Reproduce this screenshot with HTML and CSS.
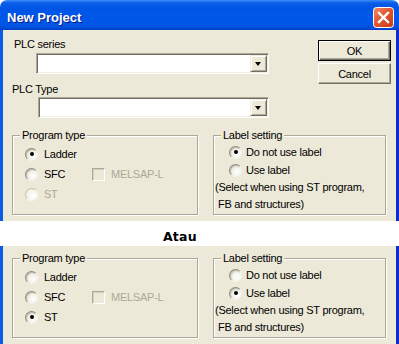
FILE: index.html
```html
<!DOCTYPE html>
<html lang="en">
<head>
    <meta charset="UTF-8">
    <meta name="viewport" content="width=device-width, initial-scale=1.0">
    <title>New Project</title>
    <link rel="stylesheet" href="styles.css">
</head>
<body>
    <div class="window">
        <div class="titlebar">
            <span class="title">New Project</span>
            <button class="close-btn" aria-label="Close">
                <svg width="21" height="21" viewBox="0 0 21 21">
                    <defs>
                        <linearGradient id="closeFill" x1="0" y1="0" x2="1" y2="1">
                            <stop offset="0" stop-color="#f08a68"/>
                            <stop offset="0.5" stop-color="#e0532c"/>
                            <stop offset="1" stop-color="#c43a16"/>
                        </linearGradient>
                    </defs>
                    <rect x="0.5" y="0.5" width="20" height="20" rx="3" fill="url(#closeFill)" stroke="#ffffff"/>
                    <path d="M6 6 L15 15 M15 6 L6 15" stroke="#ffffff" stroke-width="2.4" stroke-linecap="square"/>
                </svg>
            </button>
        </div>

        <div class="dialog-body">
            <div class="top-row">
                <div class="plc-fields">
                    <div class="field-label label-series">PLC series</div>
                    <div class="combo combo-series"><span class="combo-arrow"></span></div>
                    <div class="field-label label-type">PLC Type</div>
                    <div class="combo combo-type"><span class="combo-arrow"></span></div>
                </div>
                <div class="dialog-buttons">
                    <button class="btn btn-default">OK</button>
                    <button class="btn">Cancel</button>
                </div>
            </div>

            <div class="group-row">
                <div class="group group-program">
                    <span class="group-title">Program type</span>
                    <div class="option-row">
                        <span class="radio checked"></span><span>Ladder</span>
                    </div>
                    <div class="option-row">
                        <span class="option-pair"><span class="radio"></span><span>SFC</span></span>
                        <span class="checkbox disabled"></span><span class="muted">MELSAP-L</span>
                    </div>
                    <div class="option-row">
                        <span class="radio disabled"></span><span class="muted">ST</span>
                    </div>
                </div>
                <div class="group group-label">
                    <span class="group-title">Label setting</span>
                    <div class="label-row">
                        <span class="radio checked"></span><span>Do not use label</span>
                    </div>
                    <div class="label-row">
                        <span class="radio"></span><span>Use label</span>
                    </div>
                    <div class="note-line">(Select when using ST program,</div>
                    <div class="note-line note-indent">FB and structures)</div>
                </div>
            </div>
        </div>

        <div class="divider">Atau</div>

        <div class="dialog-body dialog-crop">
            <div class="group-row">
                <div class="group group-program">
                    <span class="group-title">Program type</span>
                    <div class="option-row">
                        <span class="radio"></span><span>Ladder</span>
                    </div>
                    <div class="option-row">
                        <span class="option-pair"><span class="radio"></span><span>SFC</span></span>
                        <span class="checkbox disabled"></span><span class="muted">MELSAP-L</span>
                    </div>
                    <div class="option-row">
                        <span class="radio checked"></span><span>ST</span>
                    </div>
                </div>
                <div class="group group-label">
                    <span class="group-title">Label setting</span>
                    <div class="label-row">
                        <span class="radio"></span><span>Do not use label</span>
                    </div>
                    <div class="label-row">
                        <span class="radio checked"></span><span>Use label</span>
                    </div>
                    <div class="note-line">(Select when using ST program,</div>
                    <div class="note-line note-indent">FB and structures)</div>
                </div>
            </div>
        </div>
    </div>
</body>
</html>
```

FILE: styles.css
```css
body {
    margin: 0;
    background-color: #ffffff;
    font-family: "Liberation Sans", Arial, sans-serif;
    font-size: 11px;
    letter-spacing: -0.25px;
    color: #000000;
}

.window {
    width: 399px;
}

/* Title bar */
.titlebar {
    height: 30px;
    display: flex;
    justify-content: space-between;
    align-items: flex-start;
    padding: 0 5px 0 7px;
    box-sizing: border-box;
    border-radius: 7px 7px 0 0;
    background: linear-gradient(to bottom, #3d8cf5 0px, #0a5ee8 3px, #0055e5 8px, #0058eb 20px, #0053e0 27px, #003dc8 30px);
}

.title {
    margin-top: 10px;
    font-size: 13px;
    line-height: 15px;
    font-weight: bold;
    letter-spacing: 0;
    color: #ffffff;
    text-shadow: 1px 1px 0 #0a1883;
}

.close-btn {
    margin-top: 7px;
    padding: 0;
    border: none;
    background: none;
    width: 21px;
    height: 21px;
}

.close-btn svg {
    display: block;
}

/* Dialog body */
.dialog-body {
    height: 191px;
    box-sizing: border-box;
    background-color: #ece9d8;
    border-left: 3px solid #0a5be6;
    border-right: 3px solid #0a2dcf;
}

.top-row {
    display: flex;
    padding-top: 8px;
}

.plc-fields {
    width: 266px;
}

.field-label {
    line-height: 13px;
}

.label-series {
    padding-left: 11px;
}

.label-type {
    margin-top: 9px;
    padding-left: 9px;
}

.combo {
    position: relative;
    height: 21px;
    box-sizing: border-box;
    background-color: #ffffff;
    border-style: solid;
    border-width: 1px;
    border-color: #aca899 #ffffff #ffffff #aca899;
    box-shadow: inset 1px 1px 0 #716f64, inset -1px -1px 0 #f1efe2;
}

.combo-series {
    margin-top: 2px;
    margin-left: 33px;
    width: 233px;
}

.combo-type {
    margin-top: 1px;
    margin-left: 35px;
    width: 231px;
}

.combo-arrow {
    position: absolute;
    top: 1px;
    right: 1px;
    width: 17px;
    height: 17px;
    box-sizing: border-box;
    background-color: #ece9d8;
    border-style: solid;
    border-width: 1px;
    border-color: #f1efe2 #716f64 #716f64 #f1efe2;
    box-shadow: inset 1px 1px 0 #ffffff, inset -1px -1px 0 #aca899;
}

.combo-arrow::after {
    content: "";
    position: absolute;
    left: 4px;
    top: 6px;
    border-left: 3.5px solid transparent;
    border-right: 3.5px solid transparent;
    border-top: 4px solid #000000;
}

.dialog-buttons {
    margin-left: 49px;
    margin-top: 2px;
    display: flex;
    flex-direction: column;
    gap: 2px;
}

.btn {
    width: 73px;
    height: 21px;
    padding: 0;
    font-family: "Liberation Sans", Arial, sans-serif;
    font-size: 11px;
    letter-spacing: -0.25px;
    color: #000000;
    background-color: #ece9d8;
    border-style: solid;
    border-width: 1px;
    border-color: #ffffff #716f64 #716f64 #ffffff;
    box-shadow: inset -1px -1px 0 #aca899;
}

.btn-default {
    border: 1px solid #000000;
    box-shadow: inset 1px 1px 0 #ffffff, inset -1px -1px 0 #716f64, inset -2px -2px 0 #aca899;
}

/* Group boxes */
.group-row {
    display: flex;
    margin-top: 17px;
}

.dialog-crop {
    height: 98px;
    padding-top: 12px;
}

.dialog-crop .group-row {
    margin-top: 0;
}

.group {
    position: relative;
    height: 80px;
    box-sizing: border-box;
    border: 1px solid #aca899;
    box-shadow: inset 1px 1px 0 #ffffff, 1px 1px 0 #ffffff;
}

.group-program {
    margin-left: 9px;
    width: 186px;
    padding-top: 8px;
}

.group-label {
    margin-left: 15px;
    width: 173px;
    padding-top: 7px;
}

.group-title {
    position: absolute;
    top: -7px;
    left: 7px;
    padding: 0 2px;
    line-height: 13px;
    background-color: #ece9d8;
}

.option-row {
    display: flex;
    align-items: center;
    height: 20px;
    padding-left: 12px;
}

.option-row .radio {
    margin-right: 6px;
}

.option-pair {
    display: flex;
    align-items: center;
    width: 67px;
}

.label-row {
    display: flex;
    align-items: center;
    height: 18px;
    padding-left: 15px;
}

.label-row .radio {
    margin-right: 4px;
}

.note-line {
    line-height: 17px;
    padding-left: 1px;
}

.note-indent {
    padding-left: 4px;
}

/* Radio buttons and check boxes */
.radio {
    position: relative;
    flex: none;
    width: 13px;
    height: 13px;
    box-sizing: border-box;
    border-radius: 50%;
    border: 1px solid;
    border-color: #8f8c7e #f4f3ec #f4f3ec #8f8c7e;
    background: radial-gradient(circle at 65% 65%, #ffffff 0, #f3f2ea 45%, #d6d3c4 100%);
    box-shadow: inset 1px 1px 1px rgba(0, 0, 0, 0.18);
}

.radio.checked::after {
    content: "";
    position: absolute;
    left: 3.5px;
    top: 3.5px;
    width: 4px;
    height: 4px;
    border-radius: 50%;
    background-color: #000000;
}

.radio.disabled {
    border-color: #c9c6b8 #f7f6f0 #f7f6f0 #c9c6b8;
    background: radial-gradient(circle at 65% 65%, #ffffff 0, #f6f5ef 50%, #e6e3d6 100%);
    box-shadow: none;
}

.checkbox {
    flex: none;
    width: 13px;
    height: 13px;
    margin-right: 6px;
    box-sizing: border-box;
    border: 1px solid;
    border-color: #aca899 #ffffff #ffffff #aca899;
    box-shadow: inset 1px 1px 0 #d4d0c2;
    background-color: #ece9d8;
}

.muted {
    color: #aca899;
}

/* Separator band */
.divider {
    height: 25px;
    box-sizing: border-box;
    padding: 9px 0 0 163px;
    font-family: "DejaVu Sans", sans-serif;
    font-size: 12.5px;
    line-height: 14px;
    font-weight: bold;
    letter-spacing: 0.2px;
    background-color: #ffffff;
}
```
